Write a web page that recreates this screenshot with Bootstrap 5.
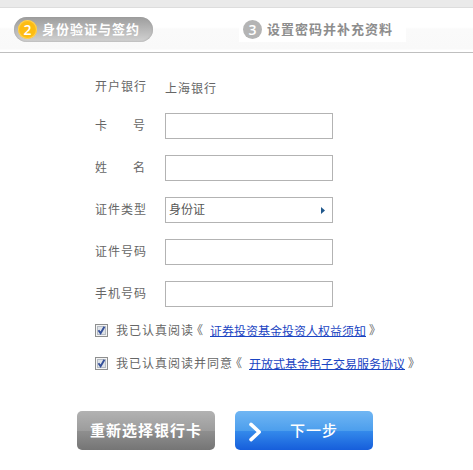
<!DOCTYPE html>
<html lang="zh-CN">
<head>
<meta charset="utf-8">
<title>身份验证与签约</title>
<meta name="viewport" content="width=device-width, initial-scale=1">
<link href="https://cdn.jsdelivr.net/npm/bootstrap@5.3.0/dist/css/bootstrap.min.css" rel="stylesheet">
<style>
body{font:13px/16px "Noto Sans CJK SC",sans-serif;color:#666;background:#fff;width:473px;height:470px;overflow:hidden}
.steps-bar{height:53px;border-top:7px solid #eaeaea;border-bottom:1px solid #bfbfbf;background:linear-gradient(#ddd 1px,#fff 1px,#fff 20px,#fafafa 22px,#f9f9f9 42px,#fff 43px);padding:10px 0 0 14px}
.step{height:25px;font-size:13px;font-weight:700;letter-spacing:1px;line-height:22px;white-space:nowrap}
.step-on{width:139px;background:linear-gradient(#9d9d9d,#d2d2d2);color:#fff;border-radius:13px;padding-left:4px;box-shadow:inset 0 0 2px #999}
.step-next{width:167px;margin-left:86px;padding-left:4px;color:#8d8d8d;background:#fff}
.step-text{margin-top:-2px}
.num{width:19px;height:19px;border-radius:50%;font:600 14px/19px "Open Sans",sans-serif;letter-spacing:0;color:#fff;margin-right:5px;text-align:center;flex:none}
.num-on{background:#fdbc12;box-shadow:inset 0 0 1px 1px #ffd45c}
.num-off{background:#b4b4b4}
.bank-form{padding:18px 0 0 95px}
.line{height:26px;margin-bottom:16px}
.line-label{width:70px;flex:none;font-size:12px;letter-spacing:1px;line-height:16px;margin-top:-3px}
.line-value{font-size:12px;letter-spacing:1px}
.line-plain{padding-top:7px}
.split{display:flex;justify-content:space-between;padding-right:19px}
.field{width:168px;height:26px;border:1px solid #b3b3b3;border-radius:0;padding:0 7px 0 3px;font-size:12px;line-height:22px;color:#555;background:#fff}
.field-text{margin-top:-2px}
.agreements{margin-top:-1px}
.agree{height:17px;margin-bottom:16px;font-size:12px;white-space:nowrap}
.agree-text{letter-spacing:1px;margin:-2px 0 0 8px}
.half{font-feature-settings:"halt";width:6px}
.open-mark{margin:-2px 7px 0 3px}
.close-mark{margin:-2px 0 0 3px}
.agree a{color:#1a44c2;line-height:11px;height:12px;border-bottom:1px solid #1a44c2;text-decoration:none;margin-top:1px}
.tick{width:13px;height:13px;flex:none}
.action{width:138px;height:39px;border:0;border-radius:5px;padding:0;color:#fff;font-size:15px;font-weight:700;letter-spacing:1px;line-height:37px}
.action:hover{color:#fff}
.back{background:linear-gradient(#b2b2b2,#9c9c9c 20px,#8f8f8f 20px,#757575);padding-bottom:2px}
.next{background:linear-gradient(#70b6f3,#4c9eed 20px,#348aeb 20px,#165edb);font-weight:500}
.chevron{margin:2px 0 0 13px}
.next-text{margin:-2px 0 0 28px}
.actions{padding-left:77px;gap:20px;margin-top:39px}
</style>
</head>
<body>
<header class="steps-bar d-flex align-items-start">
  <div class="step step-on d-flex align-items-center"><span class="num num-on">2</span><span class="step-text">身份验证与签约</span></div>
  <div class="step step-next d-flex align-items-center"><span class="num num-off">3</span><span class="step-text">设置密码并补充资料</span></div>
</header>
<main>
  <div class="bank-form">
    <div class="line line-plain d-flex align-items-center"><span class="line-label">开户银行</span><span class="line-value">上海银行</span></div>
    <div class="line d-flex align-items-center"><label class="line-label split" for="card-no"><span>卡</span><span>号</span></label><input id="card-no" class="form-control field"></div>
    <div class="line d-flex align-items-center"><label class="line-label split" for="full-name"><span>姓</span><span>名</span></label><input id="full-name" class="form-control field"></div>
    <div class="line d-flex align-items-center"><span class="line-label">证件类型</span><div class="field d-flex align-items-center justify-content-between"><span class="field-text">身份证</span><svg width="4" height="7" viewBox="0 0 4 7"><path d="M0 0L4 3.5L0 7Z" fill="#20588c"/></svg></div></div>
    <div class="line d-flex align-items-center"><label class="line-label" for="id-no">证件号码</label><input id="id-no" class="form-control field"></div>
    <div class="line d-flex align-items-center"><label class="line-label" for="phone">手机号码</label><input id="phone" class="form-control field"></div>
    <div class="agreements">
      <div class="agree d-flex align-items-center"><svg class="tick" viewBox="0 0 13 13"><rect x=".5" y=".5" width="12" height="12" fill="#f4f4f4" stroke="#8e8f8f"/><rect x="2.5" y="2.5" width="8" height="8" fill="#dfe3e8" stroke="#b5bbc3"/><path d="M3.5 6.2L5.6 9.2L9.4 2.8" fill="none" stroke="#35509a" stroke-width="1.9"/></svg><span class="agree-text">我已认真阅读</span><span class="half open-mark">《</span><a href="#">证券投资基金投资人权益须知</a><span class="half close-mark">》</span></div>
      <div class="agree d-flex align-items-center"><svg class="tick" viewBox="0 0 13 13"><rect x=".5" y=".5" width="12" height="12" fill="#f4f4f4" stroke="#8e8f8f"/><rect x="2.5" y="2.5" width="8" height="8" fill="#dfe3e8" stroke="#b5bbc3"/><path d="M3.5 6.2L5.6 9.2L9.4 2.8" fill="none" stroke="#35509a" stroke-width="1.9"/></svg><span class="agree-text">我已认真阅读并同意</span><span class="half open-mark">《</span><a href="#">开放式基金电子交易服务协议</a><span class="half close-mark">》</span></div>
    </div>
  </div>
  <div class="actions d-flex">
    <button type="button" class="btn action back">重新选择银行卡</button>
    <button type="button" class="btn action next d-flex align-items-center"><svg width="14" height="20" viewBox="0 0 14 20" class="chevron flex-shrink-0"><path d="M3 2.4L11.2 10L3 17.6" fill="none" stroke="#fff" stroke-width="3.6" stroke-linecap="round" stroke-linejoin="round"/></svg><span class="next-text">下一步</span></button>
  </div>
</main>
</body>
</html>
